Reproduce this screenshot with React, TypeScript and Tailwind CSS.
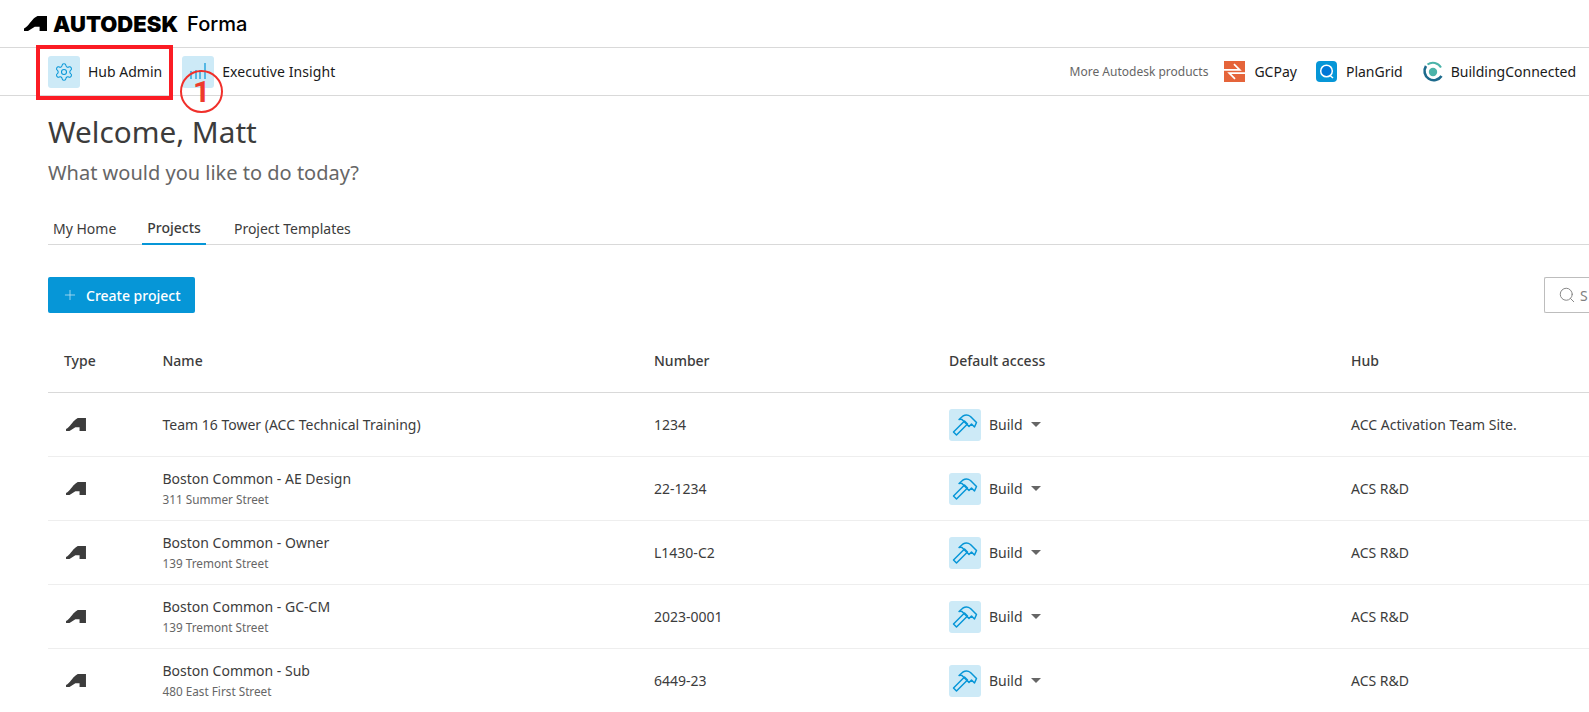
import React from 'react';
import { Search, Plus, Settings } from 'lucide-react';

const font = "font-['Noto_Sans',sans-serif]";

const projects = [
  { name: 'Team 16 Tower (ACC Technical Training)', address: '', number: '1234', hub: 'ACC Activation Team Site.' },
  { name: 'Boston Common - AE Design', address: '311 Summer Street', number: '22-1234', hub: 'ACS R&D' },
  { name: 'Boston Common - Owner', address: '139 Tremont Street', number: 'L1430-C2', hub: 'ACS R&D' },
  { name: 'Boston Common - GC-CM', address: '139 Tremont Street', number: '2023-0001', hub: 'ACS R&D' },
  { name: 'Boston Common - Sub', address: '480 East First Street', number: '6449-23', hub: 'ACS R&D' },
];

const AutodeskMark = ({ className }: { className?: string }) => (
  <svg viewBox="0 0 23 15" className={className} fill="currentColor">
    <path d="M0 15 V12.6 C4.5 10.5 7.5 4 11 1.6 L13.5 0 H23 V15 H15.6 V10.8 H10.8 L4 15 Z" />
  </svg>
);

const HammerIcon = () => (
  <svg viewBox="0 0 32 32" className="h-[32px] w-[32px] text-[#0696d7]" fill="none" stroke="currentColor" strokeWidth="1.5" strokeLinejoin="round">
    <path d="M4.5 23 L7.5 26 L18.5 15 L15.5 12 Z" />
    <path d="M10 10.5 L14 7 Q18 5 21.5 7.5 L27.5 13.5 L25.5 18 L22.5 15 L20 17.5 L13 10.5 Q11.5 9.8 10 10.5 Z" />
  </svg>
);

const ProductLink = ({ icon, label, gap }: { icon: React.ReactNode; label: string; gap: string }) => (
  <div className={`flex items-center ${gap}`}>
    {icon}
    <span className="text-[14px] text-[#1a1a1a]">{label}</span>
  </div>
);

export default function App() {
  return (
    <div className={`${font} relative h-[712px] w-[1589px] overflow-hidden bg-white`}>
      {/* Logo bar */}
      <div className="flex h-[48px] items-center border-b border-[#d9d9d9] pl-[24px] text-black">
        <AutodeskMark className="h-[15px] w-[23px]" />
        <span className="ml-[6px] font-['Inter',sans-serif] text-[22px] font-black leading-none">AUTODESK</span>
        <span className="ml-[9px] font-['Inter',sans-serif] text-[20px] font-medium leading-none">Forma</span>
      </div>

      {/* Nav bar */}
      <div className="flex h-[48px] items-center justify-between border-b border-[#d9d9d9] pl-[48px] pr-[13px]">
        <div className="flex items-center">
          <div className="flex h-[32px] w-[32px] items-center justify-center rounded-[3px] bg-[#cdeaf7]">
            <Settings className="h-[20px] w-[20px] text-[#0696d7]" strokeWidth={1.25} />
          </div>
          <span className="ml-[8px] text-[14px] text-[#1a1a1a]">Hub Admin</span>
          <div className="ml-[20px] flex h-[32px] w-[32px] items-center justify-center rounded-[3px] bg-[#cdeaf7]">
            <svg viewBox="0 0 32 32" className="h-[32px] w-[32px] text-[#0696d7]" stroke="currentColor" strokeWidth="1.2">
              <path d="M9 23 V15 M14 23 V14 M18 23 V14 M23 23 V7" />
            </svg>
          </div>
          <span className="ml-[8px] text-[14px] tracking-[0.1px] text-[#1a1a1a]">Executive Insight</span>
        </div>
        <div className="flex items-center">
          <span className="mr-[16px] text-[12px] text-[#666666]">More Autodesk products</span>
          <ProductLink
            label="GCPay"
            gap="gap-[9px]"
            icon={
              <svg viewBox="0 0 20 20" className="h-[21px] w-[21px]">
                <rect width="20" height="20" fill="#e5643a" />
                <path d="M0 8.5 H15 L9.5 3 M20 11.5 H5 L10.5 17" fill="none" stroke="#fff" strokeWidth="1.6" />
              </svg>
            }
          />
          <div className="ml-[19px]">
            <ProductLink
              label="PlanGrid"
              gap="gap-[9px]"
              icon={
                <svg viewBox="0 0 21 21" className="h-[21px] w-[21px]">
                  <rect width="21" height="21" rx="4" fill="#0696d7" />
                  <circle cx="10.5" cy="10" r="5.8" fill="#0078d7" stroke="#fff" strokeWidth="1.5" />
                  <path d="M14 14.5 L17 17" stroke="#fff" strokeWidth="1.5" />
                </svg>
              }
            />
          </div>
          <div className="ml-[19px]">
            <ProductLink
              label="BuildingConnected"
              gap="gap-[7px]"
              icon={
                <svg viewBox="0 0 22 22" className="h-[22px] w-[22px]" fill="none">
                  <circle cx="11" cy="11" r="4.2" fill="#4bb3a9" />
                  <path d="M5.5 3.5 A 9.2 9.2 0 0 1 19 6.5" stroke="#4bb3a9" strokeWidth="2" />
                  <path d="M4 5 A 9.2 9.2 0 0 0 19.5 15" stroke="#1c6a8c" strokeWidth="2.6" />
                </svg>
              }
            />
          </div>
        </div>
      </div>

      {/* Greeting */}
      <div className="pl-[48px]">
        <h1 className="mt-[18px] text-[29.7px] leading-[36px] text-[#3c3c3c]">Welcome, Matt</h1>
        <p className="mt-[9px] text-[20px] leading-[28px] text-[#666666]">What would you like to do today?</p>

        {/* Tabs */}
        <div className="mt-[19px] flex h-[39px] border-b border-[#d9d9d9] text-[14px] text-[#3c3c3c]">
          <div className="flex h-[39px] items-center px-[5px] pt-[5px]">My Home</div>
          <div className="ml-[21px] flex h-[39px] items-center border-b-2 border-[#0696d7] px-[5px] pt-[5px] font-medium">Projects</div>
          <div className="ml-[23px] flex h-[39px] items-center px-[5px] pt-[5px]">Project Templates</div>
        </div>

        {/* Toolbar */}
        <div className="mt-[32px] flex h-[36px] items-center justify-between">
          <button className="flex h-[36px] w-[147px] items-center rounded-[2px] bg-[#0696d7] pl-[14px] text-[14px] font-medium text-white">
            <Plus className="h-[16px] w-[16px] opacity-70" strokeWidth={1.25} />
            <span className="ml-[8px]">Create project</span>
          </button>
          <div className="flex h-[36px] w-[45px] items-center rounded-l-[2px] border-y border-l border-[#bdbdbd] pl-[13px] text-[#808080]">
            <Search className="h-[18px] w-[18px] shrink-0" strokeWidth={1.25} />
            <span className="ml-[4px] text-[14px]">S</span>
          </div>
        </div>

        {/* Table */}
        <div className="mt-[16px] text-[14px] text-[#3c3c3c]">
          <div className="grid h-[64px] grid-cols-[114.5px_491.5px_295px_402px_238px] items-center border-b border-[#d9d9d9] font-medium">
            <div className="pl-[16px]">Type</div>
            <div>Name</div>
            <div>Number</div>
            <div>Default access</div>
            <div>Hub</div>
          </div>
          {projects.map((p) => (
            <div key={p.name} className="grid h-[64px] grid-cols-[114.5px_491.5px_295px_402px_238px] items-center border-b border-[#eeeeee]">
              <div className="pl-[18px] text-[#3c3c3c]">
                <AutodeskMark className="h-[13px] w-[20px]" />
              </div>
              <div>
                <div className="leading-[20px]">{p.name}</div>
                {p.address && <div className="mt-[1px] text-[11.75px] leading-[18px] text-[#666666]">{p.address}</div>}
              </div>
              <div>{p.number}</div>
              <div className="flex items-center">
                <div className="flex h-[32px] w-[32px] items-center justify-center rounded-[3px] bg-[#cdeaf7]">
                  <HammerIcon />
                </div>
                <span className="ml-[8px]">Build</span>
                <span className="ml-[8px] h-0 w-0 border-x-[5px] border-t-[5px] border-x-transparent border-t-[#666666]" />
              </div>
              <div>{p.hub}</div>
            </div>
          ))}
        </div>
      </div>

      {/* Annotation */}
      <div className="absolute left-[36px] top-[45px] h-[55px] w-[137px] border-[4px] border-[#fb1c24]" />
      <div className="absolute left-[180px] top-[70px] flex h-[43px] w-[43px] items-center justify-center rounded-full border-2 border-[#f0302b] font-['Roboto',sans-serif] text-[30px] font-bold text-[#ee3a2c]">
        1
      </div>
    </div>
  );
}
